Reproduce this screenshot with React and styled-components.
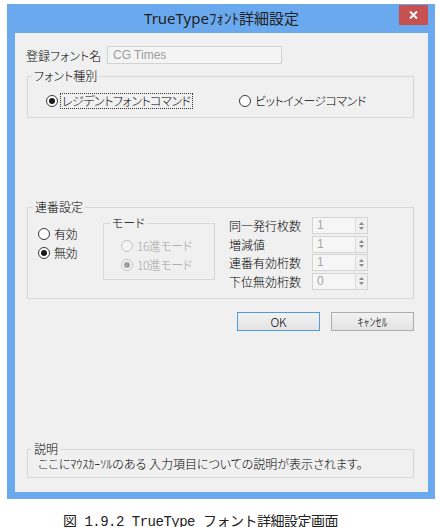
import React from "react";
import { styled, createGlobalStyle } from "styled-components";

const GlobalStyle = createGlobalStyle`
  body {
    margin: 0;
    background: #fff;
    font-family: "Noto Sans CJK JP", sans-serif;
    font-size: 12px;
    font-weight: 300;
    color: #000;
    font-feature-settings: "palt";
  }
`;

const Radio = ({ checked, disabled, focused, height = 16, children }) => (
  <RadioRow $height={height} $disabled={disabled}>
    <RadioCircle $checked={checked} $disabled={disabled} />
    <RadioText $focused={focused}>{children}</RadioText>
  </RadioRow>
);

const Spin = ({ label, value }) => (
  <SpinRow>
    <SpinLabel>{label}</SpinLabel>
    <SpinBox>
      <SpinValue>{value}</SpinValue>
      <SpinButtons>
        <svg width="5" height="3" viewBox="0 0 5 3">
          <path d="M0 3 L2.5 0 L5 3 Z" fill="#8a8a8a" />
        </svg>
        <svg width="5" height="3" viewBox="0 0 5 3">
          <path d="M0 0 L2.5 3 L5 0 Z" fill="#8a8a8a" />
        </svg>
      </SpinButtons>
    </SpinBox>
  </SpinRow>
);

const App = () => {
  return (
    <>
      <GlobalStyle />
      <Window>
        <TitleBar>
          <span />
          <Title>TrueTypeﾌｫﾝﾄ詳細設定</Title>
          <CloseButton>
            <svg width="9" height="8" viewBox="0 0 9 8">
              <path d="M1 0.5 L8 7.5 M8 0.5 L1 7.5" stroke="#fff" strokeWidth="2" />
            </svg>
          </CloseButton>
        </TitleBar>

        <Client>
          <NameRow>
            <FieldLabel>登録フォント名</FieldLabel>
            <TextBox>CG Times</TextBox>
          </NameRow>

          <Group $top={5} $pad="10px 0 8px">
            <Legend>フォント種別</Legend>
            <RadioLine>
              <RadioSlot $width={193}>
                <Radio checked focused>レジデントフォントコマンド</Radio>
              </RadioSlot>
              <Radio>ビットイメージコマンド</Radio>
            </RadioLine>
          </Group>

          <Group $top={82} $pad="0">
            <Legend $left={5}>連番設定</Legend>
            <SerialBody>
              <EnableCol>
                <Radio height={19}>有効</Radio>
                <Radio height={19} checked>無効</Radio>
              </EnableCol>

              <ModeGroup>
                <Legend $left={6}>モード</Legend>
                <ModeList>
                  <Radio height={19} disabled>16進モード</Radio>
                  <Radio height={19} disabled checked>10進モード</Radio>
                </ModeList>
              </ModeGroup>

              <SpinCol>
                <Spin label="同一発行枚数" value="1" />
                <Spin label="増減値" value="1" />
                <Spin label="連番有効桁数" value="1" />
                <Spin label="下位無効桁数" value="0" />
              </SpinCol>
            </SerialBody>
          </Group>

          <ButtonRow>
            <Button $default>OK</Button>
            <Button>ｷｬﾝｾﾙ</Button>
          </ButtonRow>

          <Group $top={111} $pad="1px 0 6px">
            <Legend>説明</Legend>
            <HelpText>ここにﾏｳｽｶｰｿﾙのある 入力項目についての説明が表示されます。</HelpText>
          </Group>
        </Client>
      </Window>
      <Caption>図 1.9.2 TrueType フォント詳細設定画面</Caption>
    </>
  );
};

const Window = styled.div`
  margin: 4px 0 0 7px;
  width: 428px;
  box-sizing: border-box;
  padding: 0 7px 7px 8px;
  background: #6ba9ee;
  display: flex;
  flex-direction: column;
`;

const TitleBar = styled.div`
  height: 29px;
  display: grid;
  grid-template-columns: 1fr auto 1fr;
  align-items: start;
`;

const Title = styled.div`
  line-height: 29px;
  font-family: "Noto Sans", "Noto Sans CJK JP", sans-serif;
  font-size: 15px;
  font-weight: 400;
  color: #1f1f1f;
  font-feature-settings: normal;
`;

const CloseButton = styled.div`
  justify-self: end;
  margin-top: 1px;
  width: 29px;
  height: 20px;
  background: #c75050;
  display: flex;
  align-items: center;
  justify-content: center;
`;

const Client = styled.div`
  height: 459px;
  box-sizing: border-box;
  padding: 0 14px 0 12px;
  background: #f0f0f0;
  display: flex;
  flex-direction: column;
`;

const NameRow = styled.div`
  margin-top: 13px;
  height: 18px;
  display: flex;
  align-items: center;
`;

const FieldLabel = styled.span`
  width: 81px;
  margin-left: -1px;
`;

const TextBox = styled.div`
  width: 175px;
  height: 18px;
  box-sizing: border-box;
  border: 1px solid #d2d2d2;
  background: #f4f4f4;
  padding-left: 5px;
  font-family: "Liberation Sans", sans-serif;
  font-size: 12px;
  font-weight: 400;
  line-height: 16px;
  color: #9c9c9c;
`;

const Group = styled.fieldset`
  margin: ${(p) => p.$top}px 0 0;
  padding: ${(p) => p.$pad};
  border: 1px solid #d8d8d8;
  min-width: 0;
`;

const Legend = styled.legend`
  margin-left: ${(p) => p.$left ?? 4}px;
  padding: 0 2px;
  font-size: 12px;
  line-height: 14px;
`;

const RadioLine = styled.div`
  padding-left: 18px;
  display: flex;
  align-items: center;
`;

const RadioSlot = styled.div`
  width: ${(p) => p.$width}px;
`;

const RadioRow = styled.div`
  height: ${(p) => p.$height}px;
  display: flex;
  align-items: center;
  gap: 2px;
  color: ${(p) => (p.$disabled ? "#a3a3a3" : "#000")};
`;

const RadioCircle = styled.span`
  width: 12px;
  height: 12px;
  flex-shrink: 0;
  box-sizing: border-box;
  border-radius: 50%;
  border: 1px solid ${(p) => (p.$disabled ? "#c4c4c4" : "#3a3a3a")};
  background: ${(p) => (p.$disabled ? "#f3f3f3" : "#fff")};
  display: flex;
  align-items: center;
  justify-content: center;

  &::after {
    content: "";
    display: ${(p) => (p.$checked ? "block" : "none")};
    width: 6px;
    height: 6px;
    border-radius: 50%;
    background: ${(p) => (p.$disabled ? "#a0a0a0" : "#1a1a1a")};
  }
`;

const RadioText = styled.span`
  padding: 0 1px;
  line-height: 14px;
  letter-spacing: -0.5px;
  border: 1px dotted ${(p) => (p.$focused ? "#333" : "transparent")};
`;

const SerialBody = styled.div`
  height: 84px;
  padding-left: 10px;
  display: flex;
  align-items: flex-start;
`;

const EnableCol = styled.div`
  width: 65px;
  padding-top: 10px;
  display: flex;
  flex-direction: column;
`;

const ModeGroup = styled.fieldset`
  margin: 2px 0 0;
  width: 112px;
  box-sizing: border-box;
  padding: 6px 0 5px;
  border: 1px solid #d8d8d8;
  min-width: 0;
`;

const ModeList = styled.div`
  padding-left: 17px;
`;

const SpinCol = styled.div`
  margin-left: 14px;
  padding-top: 3px;
  display: flex;
  flex-direction: column;
  gap: 1.5px;
`;

const SpinRow = styled.div`
  display: flex;
  align-items: center;
  height: 17px;
`;

const SpinLabel = styled.span`
  width: 83px;
`;

const SpinBox = styled.div`
  width: 56px;
  height: 17px;
  box-sizing: border-box;
  border: 1px solid #d4d4d4;
  background: #f6f6f6;
  display: flex;
`;

const SpinValue = styled.span`
  flex: 1;
  padding-left: 4px;
  font-family: "Liberation Sans", sans-serif;
  font-size: 12px;
  font-weight: 400;
  line-height: 15px;
  color: #a6a6a6;
`;

const SpinButtons = styled.div`
  width: 11px;
  border-left: 1px solid #dcdcdc;
  background: #f0f0f0;
  display: flex;
  flex-direction: column;
  align-items: center;
  justify-content: center;
  gap: 2px;
`;

const ButtonRow = styled.div`
  margin-top: 13px;
  display: flex;
  justify-content: flex-end;
  gap: 11px;
`;

const Button = styled.div`
  width: 83px;
  height: 19px;
  box-sizing: border-box;
  border: 1px solid ${(p) => (p.$default ? "#4d9be0" : "#adadad")};
  background: linear-gradient(#f2f2f2, #e3e3e3);
  display: flex;
  align-items: center;
  justify-content: center;
  font-size: 12px;
  font-family: "Noto Sans CJK JP", sans-serif;
`;

const HelpText = styled.div`
  padding-left: 10px;
  line-height: 14px;
`;

const Caption = styled.div`
  margin-top: 13px;
  padding-left: 63px;
  font-family: "Liberation Mono", "Noto Sans CJK JP", monospace;
  font-size: 14px;
  font-weight: 400;
  letter-spacing: -0.5px;
  line-height: 20px;
  color: #222;
  font-feature-settings: normal;
`;

export default App;
